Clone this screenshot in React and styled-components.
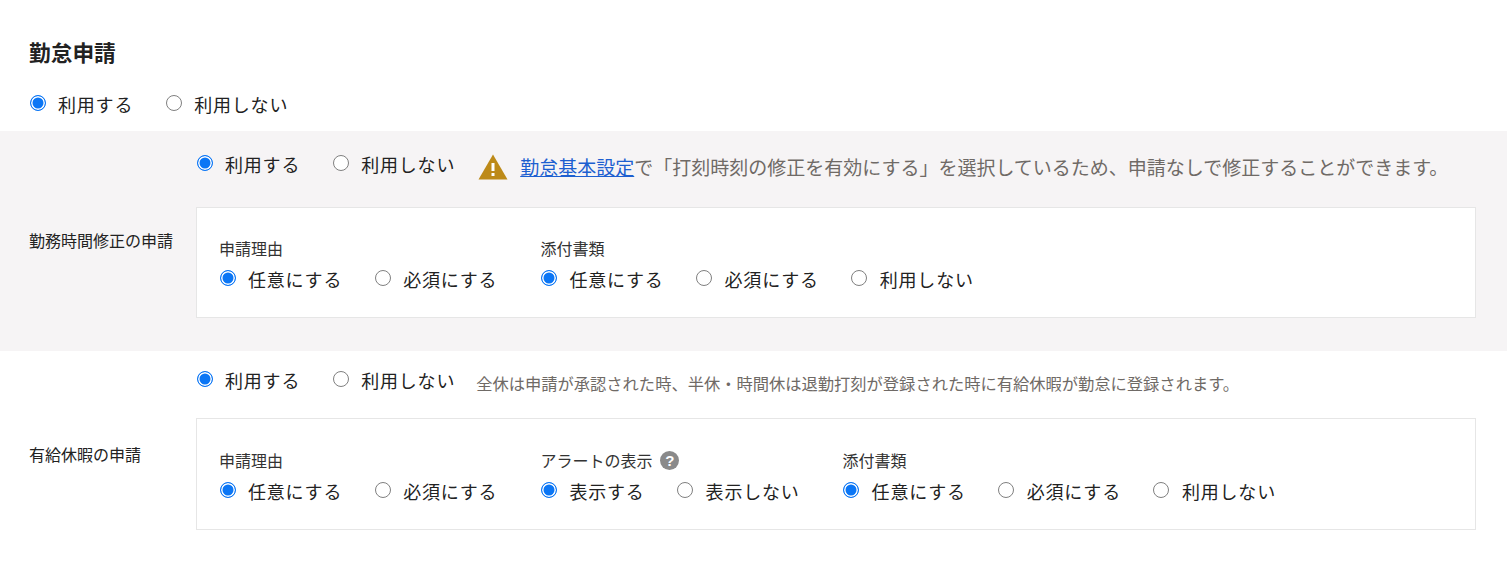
import React from "react";
import styled, { createGlobalStyle } from "styled-components";

const GlobalStyle = createGlobalStyle`
  html, body {
    margin: 0;
    padding: 0;
    background: #fff;
    font-family: "Noto Sans CJK JP", "Noto Sans", sans-serif;
    color: #222;
  }
`;

const Page = styled.div`
  padding-top: 37px;
`;

const Title = styled.h2`
  margin: 0 0 0 29px;
  font-size: 21.7px;
  line-height: 29px;
  font-weight: 700;
  color: #222;
`;

const TopChoice = styled.div`
  padding: 25px 0 0 29px;
  height: 65px;
  box-sizing: border-box;
`;

const Section = styled.section`
  display: flex;
  align-items: center;
  height: ${(p) => p.$height}px;
  padding: 0 31px 0 29px;
  background: ${(p) => (p.$shaded ? "#f6f4f5" : "#fff")};
  box-sizing: border-box;
`;

const RowLabel = styled.div`
  flex: 0 0 167px;
  padding-bottom: ${(p) => p.$lift}px;
  font-size: 16px;
  line-height: 22px;
  color: #222;
  white-space: nowrap;
`;

const RowBody = styled.div`
  flex: 1;
  align-self: flex-start;
  padding-top: ${(p) => p.$top}px;
`;

const Head = styled.div`
  display: flex;
  align-items: center;
  height: 28px;
`;

const Radios = styled.div`
  display: flex;
  align-items: center;
  gap: 32px;
`;

const Radio = styled.label`
  display: inline-flex;
  align-items: center;
  gap: 13px;
  font-size: 18px;
  line-height: 26px;
  letter-spacing: 0.8px;
  color: #222;
  white-space: nowrap;
`;

const Dot = styled.span`
  flex: none;
  width: 16px;
  height: 16px;
  margin: -2px -0.5px 0 0.5px;
  border-radius: 50%;
  box-sizing: border-box;
  background: ${(p) => (p.$on ? "#0b76f5" : "#fff")};
  border: ${(p) => (p.$on ? "1.5px solid #0b76f5" : "1.7px solid #808080")};
  box-shadow: ${(p) => (p.$on ? "inset 0 0 0 1.5px #fff" : "none")};
`;

const Notice = styled.div`
  display: flex;
  align-items: center;
  gap: 12px;
  margin-left: 23px;
  padding-top: 6px;
  font-size: 19px;
  line-height: 26px;
  color: #6f6a66;
  white-space: nowrap;
`;

const SmallNote = styled.div`
  margin-left: 21px;
  padding-top: 6px;
  font-size: 16.27px;
  color: #6f6a66;
  white-space: nowrap;
`;

const NoticeLink = styled.a`
  color: #1d5fd0;
  text-decoration: underline;
`;

const Panel = styled.div`
  display: flex;
  height: ${(p) => p.$height}px;
  margin-top: ${(p) => p.$gap}px;
  padding: ${(p) => p.$inset}px 22px 0;
  background: #fff;
  border: 1px solid #e6e6e6;
  box-sizing: border-box;
  gap: 43px;
`;

const Field = styled.div`
  display: flex;
  flex-direction: column;
`;

const FieldName = styled.div`
  display: flex;
  align-items: center;
  gap: 8px;
  height: 32px;
  padding-bottom: 4px;
  box-sizing: border-box;
  font-size: 16px;
  color: #333;
  white-space: nowrap;
`;

const HelpBadge = styled.span`
  display: inline-flex;
  align-items: center;
  justify-content: center;
  width: 19px;
  height: 19px;
  border-radius: 50%;
  background: #8a8a8a;
  color: #fff;
  font-family: "Liberation Sans", sans-serif;
  font-size: 15px;
  font-weight: 700;
`;

const WarnIcon = () => (
  <svg width="30" height="26" viewBox="0 0 30 26">
    <path d="M15 0.5 L29.5 25.5 L0.5 25.5 Z" fill="#bd8a18" />
    <rect x="13.5" y="9" width="3" height="8" fill="#fff" />
    <rect x="13.5" y="19" width="3" height="3" fill="#fff" />
  </svg>
);

const Choice = ({ on, children }) => (
  <Radio>
    <Dot $on={on} />
    {children}
  </Radio>
);

const Options = ({ items }) => (
  <Radios>
    {items.map((text, i) => (
      <Choice key={text} on={i === 0}>
        {text}
      </Choice>
    ))}
  </Radios>
);

const useOptions = ["利用する", "利用しない"];
const reasonOptions = ["任意にする", "必須にする"];
const attachOptions = ["任意にする", "必須にする", "利用しない"];

const App = () => (
  <Page>
    <GlobalStyle />
    <Title>勤怠申請</Title>
    <TopChoice>
      <Options items={useOptions} />
    </TopChoice>

    <Section $shaded $height={220}>
      <RowLabel $lift={2}>勤務時間修正の申請</RowLabel>
      <RowBody $top={19}>
        <Head>
          <Options items={useOptions} />
          <Notice>
            <WarnIcon />
            <span>
              <NoticeLink href="#">勤怠基本設定</NoticeLink>
              で「打刻時刻の修正を有効にする」を選択しているため、申請なしで修正することができます。
            </span>
          </Notice>
        </Head>
        <Panel $height={111} $gap={29} $inset={26}>
          <Field>
            <FieldName>申請理由</FieldName>
            <Options items={reasonOptions} />
          </Field>
          <Field>
            <FieldName>添付書類</FieldName>
            <Options items={attachOptions} />
          </Field>
        </Panel>
      </RowBody>
    </Section>

    <Section $height={210}>
      <RowLabel $lift={4}>有給休暇の申請</RowLabel>
      <RowBody $top={15}>
        <Head>
          <Options items={useOptions} />
          <SmallNote>全休は申請が承認された時、半休・時間休は退勤打刻が登録された時に有給休暇が勤怠に登録されます。</SmallNote>
        </Head>
        <Panel $height={112} $gap={24} $inset={27}>
          <Field>
            <FieldName>申請理由</FieldName>
            <Options items={reasonOptions} />
          </Field>
          <Field>
            <FieldName>
              アラートの表示
              <HelpBadge>?</HelpBadge>
            </FieldName>
            <Options items={["表示する", "表示しない"]} />
          </Field>
          <Field>
            <FieldName>添付書類</FieldName>
            <Options items={attachOptions} />
          </Field>
        </Panel>
      </RowBody>
    </Section>
  </Page>
);

export default App;
